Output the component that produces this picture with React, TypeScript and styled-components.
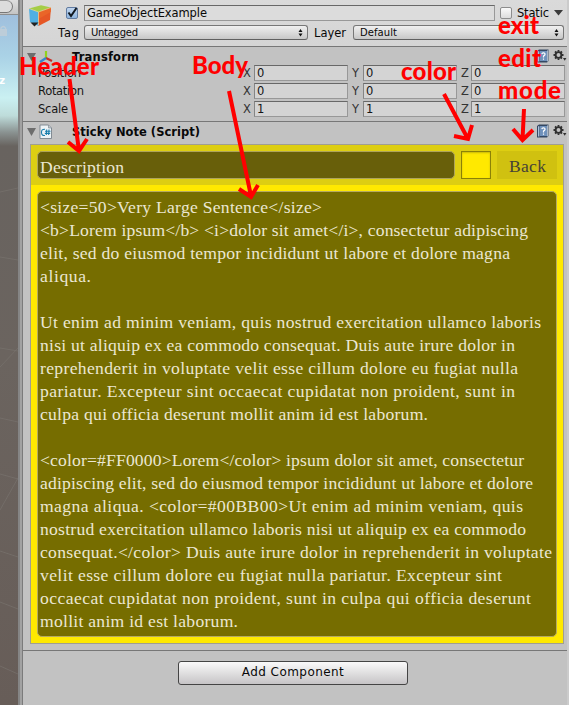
import React, { useLayoutEffect, useRef, useState } from "react";
import styled, { createGlobalStyle, css } from "styled-components";

const Global = createGlobalStyle`
  * { box-sizing: border-box; }
  body { margin: 0; overflow: hidden; background: #c2c2c2; }
`;

const Window = styled.div`
  position: relative;
  display: flex;
  width: 569px;
  height: 705px;
  overflow: hidden;
  background: #c2c2c2;
  color: #090909;
  font: 11.5px/16px "DejaVu Sans", sans-serif;
`;

/* Text whose letters are tracked so that it fills a given width. */
const Tracked = styled.span`
  display: inline-block;
  white-space: pre;
`;

function Fit({ w, children }: { w: number; children: string }) {
  const ref = useRef<HTMLSpanElement>(null);
  const [spacing, setSpacing] = useState(0);
  useLayoutEffect(() => {
    const natural = ref.current!.getBoundingClientRect().width;
    setSpacing((w - natural) / Math.max(1, children.length - 1));
  }, []);
  return (
    <Tracked ref={ref} style={{ letterSpacing: `${spacing}px` }}>
      {children}
    </Tracked>
  );
}

const Scene = styled.div`
  width: 18px;
  height: 705px;
  flex: none;
  display: flex;
  flex-direction: column;
`;
const SceneBar = styled.div`
  height: 15px;
  border-bottom: 1px solid #8e8e8e;
  background: linear-gradient(#dedede, #c4c4c4);
`;
const SearchEnd = styled.div`
  width: 13px;
  height: 13px;
  border: 1px solid #777;
  border-left: 0;
  border-top-color: #999;
  border-radius: 0 7px 7px 0;
  background: #dcdcdc;
`;
const View = styled.svg`
  display: block;
  width: 18px;
  height: 690px;
`;
const Splitter = styled.div`
  width: 5px;
  flex: none;
  background: #a2a2a2;
  border-left: 2px solid #858585;
  border-right: 1px solid #7b7b7b;
`;
const Inspector = styled.div`
  width: 544px;
  flex: none;
  display: flex;
  flex-direction: column;
`;
const Edge = styled.div`
  flex: 1;
  background: #cbcbcb;
`;

const ObjectHeader = styled.div`
  height: 47px;
  padding: 5px 2px 0 6px;
  display: flex;
  background: linear-gradient(#dadada, #d5d5d5);
  border-bottom: 1px solid #777;
`;
const CubeIcon = styled.svg`
  width: 24px;
  height: 24px;
  flex: none;
`;
const HeaderRows = styled.div`
  flex: 1;
`;
const NameRow = styled.div`
  display: flex;
  height: 16px;
  padding-left: 13px;
`;
const TagRow = styled.div`
  display: flex;
  height: 15px;
  margin-top: 4px;
  padding-left: 5px;
`;
const Check = styled.div<{ $on?: boolean }>`
  width: 12px;
  height: 12px;
  margin-top: 2px;
  flex: none;
  border: 1px solid ${(p) => (p.$on ? "#617ba0" : "#8d8d8d")};
  border-radius: 2px;
  background: ${(p) =>
    p.$on ? "linear-gradient(#c0d5ee, #8fb6df)" : "linear-gradient(#fafafa, #dcdcdc)"};
`;
const Tick = styled.svg`
  display: block;
  width: 12px;
  height: 12px;
  margin: -1px;
  overflow: visible;
`;
const Field = styled.div<{ $w: number; $light?: boolean }>`
  width: ${(p) => p.$w}px;
  height: 16px;
  flex: none;
  padding-left: 2px;
  line-height: 15px;
  border: 1px solid #989898;
  border-top-color: #686868;
  border-left-color: #858585;
  background: ${(p) => (p.$light ? "#dcdcdc" : "#d4d4d4")};
`;
const StaticText = styled.div`
  width: 37px;
  padding-left: 5px;
`;
const Caption = styled.div<{ $w: number; $pad?: number }>`
  width: ${(p) => p.$w}px;
  padding-left: ${(p) => p.$pad ?? 0}px;
  flex: none;
`;
const Popup = styled.div<{ $w: number }>`
  width: ${(p) => p.$w}px;
  height: 15px;
  flex: none;
  display: flex;
  justify-content: space-between;
  padding: 0 4px 0 6px;
  font-size: 10px;
  line-height: 14px;
  border: 1px solid #777;
  border-bottom-color: #606060;
  border-radius: 3px;
  background: linear-gradient(#f0f0f0, #c7c7c7);
`;
const Arrows = styled.svg`
  width: 5px;
  height: 13px;
`;
const Drop = styled.svg`
  width: 9px;
  height: 6px;
  margin: 5px 0 0 0;
`;

const Component = styled.div<{ $h: number }>`
  height: ${(p) => p.$h}px;
  border-bottom: 1px solid #777;
`;
const TitleBar = styled.div<{ $h: number }>`
  display: flex;
  height: ${(p) => p.$h}px;
  padding: 2px 0 0 4px;
`;
const Fold = styled.svg`
  width: 9px;
  height: 8px;
  margin-top: 4px;
  flex: none;
`;
const TypeIcon = styled.svg`
  width: 14px;
  height: 16px;
  margin-left: 3px;
  flex: none;
`;
const Title = styled.div`
  width: 483px;
  flex: none;
  padding-left: 19px;
  font-weight: bold;
`;
const BookIcon = styled.svg`
  width: 14px;
  height: 14px;
  flex: none;
`;
const Gear = styled.svg`
  width: 14px;
  height: 14px;
  margin-left: 3px;
  flex: none;
`;
const VectorRow = styled.div`
  display: flex;
  height: 18px;
  padding-left: 15px;
  color: #151515;
`;
const Axis = styled.div<{ $w: number }>`
  width: ${(p) => p.$w}px;
  padding-left: ${(p) => (p.$w > 12 ? 4 : 0)}px;
  color: #333;
  flex: none;
`;

const serif = css`
  font-family: "Liberation Serif", serif;
  font-size: 17.6px;
  color: #ebe7d2;
`;
const Note = styled.div`
  width: 534px;
  height: 500px;
  margin-left: 7px;
  border: 1px solid #a09e91;
  background: #ffe900;
`;
const NoteHead = styled.div`
  display: flex;
  height: 40px;
  padding: 6px 6px 0;
  background: #ddce12;
`;
const HeadField = styled.div`
  ${serif}
  width: 418px;
  height: 28px;
  padding-left: 2px;
  line-height: 30px;
  border: 1px solid #aea45b;
  border-radius: 5px;
  background: #685f0a;
`;
const Swatch = styled.div`
  width: 30px;
  height: 28px;
  margin-left: 6px;
  border: 1px solid #8b8107;
  background: #ffe900;
  box-shadow: inset 0 1px 2px #c8b80a;
`;
const Back = styled.div`
  ${serif}
  width: 60px;
  height: 28px;
  margin-left: 6px;
  line-height: 31px;
  padding-left: 12px;
  color: #464236;
  background: #d0c110;
`;
const Body = styled.div`
  ${serif}
  width: 520px;
  height: 446px;
  margin: 6px 0 0 6px;
  padding: 4px 0 0 2px;
  border: 1px solid #b5aa62;
  border-radius: 5px;
  background: #766d00;
`;
const Line = styled.div`
  height: 23px;
  line-height: 23px;
`;
const Add = styled.div`
  width: 230px;
  height: 24px;
  margin: 10px 0 0 155px;
  text-align: center;
  line-height: 21px;
  font-size: 12px;
  border: 1px solid #444;
  border-radius: 3px;
  background: linear-gradient(#fafafa, #c6c4c6);
`;

const Markup = styled.div`
  position: absolute;
  inset: 0;
  color: #ff0000;
`;
const Mark = styled.div<{ $x: number; $y: number }>`
  position: absolute;
  left: ${(p) => p.$x}px;
  top: ${(p) => p.$y}px;
  font: 900 24px/32px Lato, sans-serif;
`;
const Strokes = styled.svg`
  position: absolute;
  inset: 0;
  width: 569px;
  height: 705px;
`;

const noteLines: [string, number][] = [
  ["<size=50>Very Large Sentence</size>", 282],
  ["<b>Lorem ipsum</b> <i>dolor sit amet</i>, consectetur adipiscing", 488],
  ["elit, sed do eiusmod tempor incididunt ut labore et dolore magna", 470],
  ["aliqua.", 51],
  ["", 0],
  ["Ut enim ad minim veniam, quis nostrud exercitation ullamco laboris", 501],
  ["nisi ut aliquip ex ea commodo consequat. Duis aute irure dolor in", 475],
  ["reprehenderit in voluptate velit esse cillum dolore eu fugiat nulla", 478],
  ["pariatur. Excepteur sint occaecat cupidatat non proident, sunt in", 475],
  ["culpa qui officia deserunt mollit anim id est laborum.", 388],
  ["", 0],
  ["<color=#FF0000>Lorem</color> ipsum dolor sit amet, consectetur", 484],
  ["adipiscing elit, sed do eiusmod tempor incididunt ut labore et dolore", 493],
  ["magna aliqua. <color=#00BB00>Ut enim ad minim veniam, quis", 483],
  ["nostrud exercitation ullamco laboris nisi ut aliquip ex ea commodo", 486],
  ["consequat.</color> Duis aute irure dolor in reprehenderit in voluptate", 512],
  ["velit esse cillum dolore eu fugiat nulla pariatur. Excepteur sint", 462],
  ["occaecat cupidatat non proident, sunt in culpa qui officia deserunt", 491],
  ["mollit anim id est laborum.", 198],
];

const rows: [string, number, string][] = [
  ["Position", 43, "0"],
  ["Rotation", 46, "0"],
  ["Scale", 30, "1"],
];

function PopupArrows() {
  return (
    <Arrows viewBox="0 0 5 13">
      <path d="M.5 6 2.5 3 4.5 6ZM.5 7.5H4.5L2.5 10.5Z" fill="#111" />
    </Arrows>
  );
}

function FoldArrow() {
  return (
    <Fold viewBox="0 0 9 8">
      <path d="M0 0H9L4.5 8Z" fill="#6d6d6d" />
    </Fold>
  );
}

function Tools() {
  return (
    <>
      <BookIcon viewBox="0 0 14 14">
        <path d="M1 2 3 .5H12.5V12L11 13.5H1Z" fill="#344863" />
        <path d="M2 2.2H3.4V12.5H2Z" fill="#a9c1db" />
        <path d="M4 2H11V12H4Z" fill="#6f91bb" />
        <path d="M11.6 1.4V12.4" stroke="#dce4ed" strokeWidth=".8" />
        <path d="M5.8 5.2Q6 3.8 7.5 3.9 9.2 4 9 5.5 8.8 6.4 7.5 7.1V8.4M7.5 9.5V10.8" fill="none" stroke="#fff" strokeWidth="1.2" />
      </BookIcon>
      <Gear viewBox="0 0 14 14">
        <circle cx="5.5" cy="6" r="2.9" fill="none" stroke="#303030" strokeWidth="1.9" />
        <path d="M5.5 1V2.8M5.5 9.2V11M.5 6H2.3M8.7 6H10.5M2 2.5 3.2 3.7M7.8 8.3 9 9.5M9 2.5 7.8 3.7M3.2 8.3 2 9.5" stroke="#303030" strokeWidth="1.8" />
        <path d="M10 9H13.4L11.7 11.8Z" fill="#303030" />
      </Gear>
    </>
  );
}

export default function App() {
  return (
    <>
      <Global />
      <Window>
        <Scene>
          <SceneBar>
            <SearchEnd />
          </SceneBar>
          <View viewBox="0 15 18 690">
            <defs>
              <linearGradient id="sky" x1="0" y1="15" x2="0" y2="705" gradientUnits="userSpaceOnUse">
                <stop offset="0" stopColor="#9fbfdd" />
                <stop offset=".06" stopColor="#aad2e6" />
                <stop offset=".12" stopColor="#caf0f2" />
                <stop offset=".146" stopColor="#bedcda" />
                <stop offset=".17" stopColor="#8a9291" />
                <stop offset=".19" stopColor="#68635f" />
                <stop offset=".5" stopColor="#6b645f" />
                <stop offset="1" stopColor="#675d58" />
              </linearGradient>
            </defs>
            <path d="M0 15H18V705H0Z" fill="url(#sky)" />
            <path d="M0 192 18 188M0 257 18 260M0 348 18 351M0 367 18 348M0 418 18 422M0 474 18 479M0 510 18 478M0 551 18 557M0 602 18 609M0 666 18 674" stroke="#7b7570" strokeWidth=".6" fill="none" />
            <path d="M-1 29H7V36H-1Z" fill="#bdcdd9" />
            <path d="M1 30V28Q3.5 25 5.5 28V30" fill="none" stroke="#bdcdd9" strokeWidth="1.3" />
            <text x="-.7" y="84" fontSize="10" fontWeight="bold" fill="#fff">z</text>
          </View>
        </Scene>
        <Splitter />
        <Inspector>
          <ObjectHeader>
            <CubeIcon viewBox="29 5 24 24">
              <path d="M29 8.5 38.5 11.5V26L30 22Z" fill="#4fafe2" />
              <path d="M29 8.5 41 5.2 51 7.5 38.5 12Z" fill="#a5cd47" />
              <path d="M38.5 12 51 7.5 50 20 38.5 26Z" fill="#e65725" />
              <path d="M38.5 12 51 7.5 50.7 12 38.5 19Z" fill="#ea6528" />
              <path d="M29 8.5 38.5 12 51 7.5M38.5 12V25" fill="none" stroke="#e6d79a" strokeWidth=".7" />
              <path d="M30.5 22.5H38.5L34.5 26.5Z" fill="#222" />
            </CubeIcon>
            <HeaderRows>
              <NameRow>
                <Check $on>
                  <Tick viewBox="0 0 12 12">
                    <path d="M2.5 5.5 5 9 10.5 1" fill="none" stroke="#101820" strokeWidth="2" />
                  </Tick>
                </Check>
                <Caption $w={6} />
                <Field $w={411} $light><Fit w={120}>GameObjectExample</Fit></Field>
                <Caption $w={5} />
                <Check />
                <StaticText><Fit w={32}>Static</Fit></StaticText>
                <Caption $w={5} />
                <Drop viewBox="0 0 9 6"><path d="M0 0H9L4.5 5.5Z" fill="#3b3b3b" /></Drop>
              </NameRow>
              <TagRow>
                <Caption $w={26}><Fit w={21}>Tag</Fit></Caption>
                <Popup $w={224}><Fit w={47}>Untagged</Fit><PopupArrows /></Popup>
                <Caption $w={45} $pad={6}><Fit w={32}>Layer</Fit></Caption>
                <Popup $w={211}><Fit w={37}>Default</Fit><PopupArrows /></Popup>
              </TagRow>
            </HeaderRows>
          </ObjectHeader>
          <Component $h={75}>
            <TitleBar $h={18}>
              <FoldArrow />
              <TypeIcon viewBox="39 49 14 16">
                <path d="M46 59V51" stroke="#91d31c" strokeWidth="2.2" />
                <path d="M46 58 52 61" stroke="#c92c25" strokeWidth="2.2" />
                <path d="M46 58 40 62" stroke="#3286cf" strokeWidth="2.2" />
              </TypeIcon>
              <Title><Fit w={67}>Transform</Fit></Title>
              <Tools />
            </TitleBar>
            {rows.map(([label, w, value]) => (
              <VectorRow key={label}>
                <Caption $w={205}><Fit w={w}>{label}</Fit></Caption>
                <Axis $w={11}>X</Axis>
                <Field $w={94}>{value}</Field>
                <Axis $w={15}>Y</Axis>
                <Field $w={94}>{value}</Field>
                <Axis $w={14}>Z</Axis>
                <Field $w={94}>{value}</Field>
              </VectorRow>
            ))}
          </Component>
          <Component $h={529}>
            <TitleBar $h={22}>
              <FoldArrow />
              <TypeIcon viewBox="0 0 14 16">
                <path d="M1 1H9.5L12.5 4V14.5H1Z" fill="#edf3f6" stroke="#78818a" strokeWidth=".9" />
                <path d="M9.5 1V4H12.5" fill="#bac6ce" stroke="#78818a" strokeWidth=".6" />
                <path d="M6 5.2Q2.3 5 2.5 8.5 2.6 12 6 11.5M7.7 5.5 7.3 11M10 5.5 9.6 11M6 7.3H11.5M5.8 9.4H11.2" fill="none" stroke="#197eac" strokeWidth="1.1" />
              </TypeIcon>
              <Title><Fit w={128}>Sticky Note (Script)</Fit></Title>
              <Tools />
            </TitleBar>
            <Note>
              <NoteHead>
                <HeadField><Fit w={84}>Description</Fit></HeadField>
                <Swatch />
                <Back><Fit w={37}>Back</Fit></Back>
              </NoteHead>
              <Body>
                {noteLines.map(([text, w], i) => (
                  <Line key={i}>{text && <Fit w={w}>{text}</Fit>}</Line>
                ))}
              </Body>
            </Note>
          </Component>
          <Add><Fit w={102}>Add Component</Fit></Add>
        </Inspector>
        <Edge />
        <Markup>
          <Strokes viewBox="0 0 569 705" fill="none" stroke="#f00" strokeWidth="4">
            <path d="M69.5 79 79 151M68 142 79 151 87 139" />
            <path d="M229 91 251 196M239 189 251 197 258 185" />
            <path d="M444 94 468 139M454 136 468 139 472 125" />
            <path d="M524 109 522.5 140M513 129 522.5 140 533 130" />
          </Strokes>
          <Mark $x={19} $y={50}><Fit w={80}>Header</Fit></Mark>
          <Mark $x={192} $y={49}><Fit w={56}>Body</Fit></Mark>
          <Mark $x={401} $y={55}><Fit w={55}>color</Fit></Mark>
          <Mark $x={498} $y={9}><Fit w={41}>exit</Fit></Mark>
          <Mark $x={498} $y={42}><Fit w={43}>edit</Fit></Mark>
          <Mark $x={498} $y={74}><Fit w={63}>mode</Fit></Mark>
        </Markup>
      </Window>
    </>
  );
}
